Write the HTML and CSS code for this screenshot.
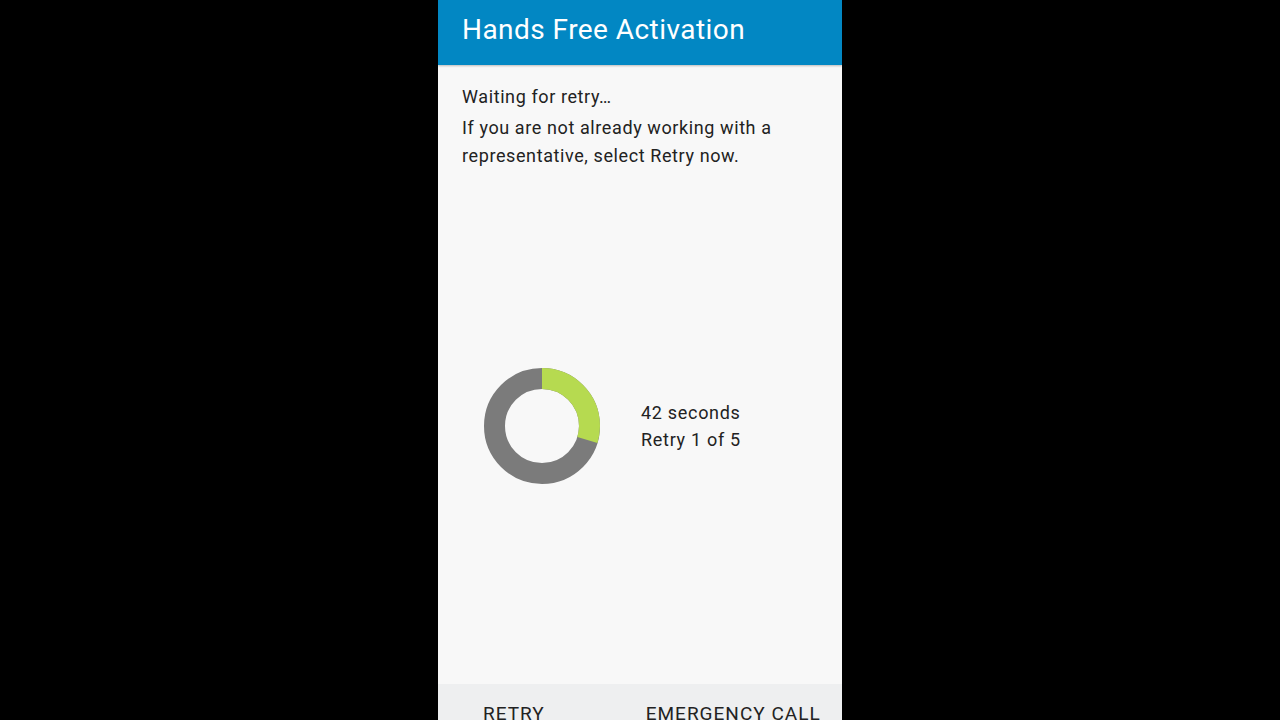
FILE: index.html
```html
<!DOCTYPE html>
<html>
<head>
<meta charset="utf-8">
<link rel="stylesheet" href="styles.css">
</head>
<body>
<div class="phone">
  <header class="appbar">Hands Free Activation</header>
  <main class="content">
    <p class="line first">Waiting for retry…</p>
    <p class="line">If you are not already working with a representative, select Retry now.</p>
    <div class="progress">
      <svg class="donut" width="118" height="118" viewBox="0 0 118 118">
        <circle cx="59" cy="59" r="47.5" fill="none" stroke="#7b7b7b" stroke-width="21"/>
        <circle cx="59" cy="59" r="47.5" fill="none" stroke="#b6da50" stroke-width="21" stroke-dasharray="88.7 300" transform="rotate(-90 59 59)"/>
      </svg>
      <div class="status">
        <div>42 seconds</div>
        <div>Retry 1 of 5</div>
      </div>
    </div>
  </main>
  <footer class="buttons">
    <span class="btn retry">RETRY</span>
    <span class="btn emergency">EMERGENCY CALL</span>
  </footer>
</div>
</body>
</html>
```
FILE: styles.css
```css
html, body {
  margin: 0;
  padding: 0;
  background: #000;
  height: 720px;
  overflow: hidden;
}
body {
  display: flex;
  justify-content: center;
  font-family: Roboto, "Noto Sans", sans-serif;
}
.phone {
  width: 404px;
  height: 720px;
  background: #f8f8f8;
  display: flex;
  flex-direction: column;
  overflow: hidden;
}
.appbar {
  height: 65px;
  flex: none;
  background: #0287c3;
  color: #fff;
  font-size: 28px;
  letter-spacing: 0.45px;
  line-height: 60px;
  padding-left: 24px;
  box-shadow: 0 1px 2px rgba(0,0,0,0.25);
  box-sizing: border-box;
}
.content {
  flex: 1;
  padding: 18px 24px 0 24px;
}
.line {
  margin: 0;
  font-size: 18px;
  letter-spacing: 0.6px;
  line-height: 28px;
  color: #222;
}
.line.first {
  margin-bottom: 3px;
}
.progress {
  display: flex;
  align-items: center;
  margin-top: 197px;
  padding-left: 22px;
}
.donut {
  flex: none;
  margin-left: -1px;
}
.status {
  margin-left: 40px;
  font-size: 18px;
  letter-spacing: 0.7px;
  line-height: 27px;
  color: #222;
  margin-top: 0;
}
.buttons {
  height: 36px;
  flex: none;
  background: #eeeff0;
  display: flex;
  align-items: flex-start;
  padding-top: 19px;
  box-sizing: border-box;
  overflow: hidden;
}
.btn {
  font-size: 19px;
  letter-spacing: 1px;
  color: #222;
  line-height: 22px;
  white-space: nowrap;
}
.retry {
  margin-left: 45px;
}
.emergency {
  margin-left: 101px;
}
```
